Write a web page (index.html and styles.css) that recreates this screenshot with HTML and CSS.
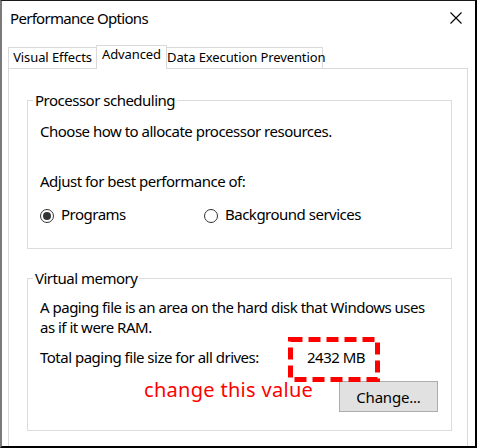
FILE: index.html
```html
<!DOCTYPE html>
<html>
<head>
<meta charset="utf-8">
<link rel="stylesheet" href="styles.css">
</head>
<body>
<div class="window">
  <div class="titlebar">
    <span class="title">Performance Options</span>
    <svg class="close" width="12" height="12" viewBox="0 0 12 12"><path d="M0.5 0.5 L11.5 11.5 M11.5 0.5 L0.5 11.5" stroke="#000" stroke-width="1.1" fill="none"/></svg>
  </div>
  <div class="tabs">
    <div class="tab tab-visual">Visual Effects</div>
    <div class="tab tab-advanced active">Advanced</div>
    <div class="tab tab-dep">Data Execution Prevention</div>
  </div>
  <div class="panel">
    <fieldset class="group group-cpu">
      <legend>Processor scheduling</legend>
      <p class="line">Choose how to allocate processor resources.</p>
      <p class="line adjust">Adjust for best performance of:</p>
      <div class="radios">
        <label class="radio"><span class="dot checked"></span>Programs</label>
        <label class="radio"><span class="dot"></span>Background services</label>
      </div>
    </fieldset>
    <fieldset class="group group-vm">
      <legend>Virtual memory</legend>
      <p class="line para">A paging file is an area on the hard disk that Windows uses as if it were RAM.</p>
      <div class="total">
        <span>Total paging file size for all drives:</span>
        <span class="value">2432 MB<svg class="mark" width="92" height="45" viewBox="0 0 92 45"><rect x="2.5" y="2.5" width="87" height="40" fill="none" stroke="#ff0000" stroke-width="5" stroke-dasharray="12 6"/></svg></span>
      </div>
      <div class="actions">
        <span class="note">change this value</span>
        <button class="btn">Change...</button>
      </div>
    </fieldset>
  </div>
</div>
</body>
</html>
```
FILE: styles.css
```css
* { box-sizing: border-box; }
html, body { margin: 0; padding: 0; background: #fff; }
body { font-family: "Noto Sans", "Open Sans", "DejaVu Sans", sans-serif; color: #000; }

.window {
  width: 477px;
  height: 448px;
  border-top: 1px solid #1a1a1a;
  border-left: 2px solid #7a7a7a;
  border-right: 2px solid #000;
  border-bottom: 2px solid #000;
  background: #fff;
  overflow: hidden;
  display: flex;
  flex-direction: column;
}

.titlebar {
  flex: none;
  height: 44px;
  display: flex;
  align-items: flex-start;
  justify-content: space-between;
  padding: 7px 13px 0 8px;
}
.title { font-size: 15px; line-height: 20px; letter-spacing: -0.7px; }
.close { margin-top: 4px; }

.tabs {
  flex: none;
  display: flex;
  align-items: flex-end;
  height: 23px;
  margin-left: 6px;
  position: relative;
  z-index: 1;
}
.tab {
  height: 21px;
  border: 1px solid #d9d9d9;
  border-bottom: 0;
  background: #fff;
  font-size: 13px;
  line-height: 18px;
  text-align: center;
  white-space: nowrap;
  letter-spacing: -0.1px;
}
.tab-visual { width: 89px; }
.tab-advanced { width: 71px; margin-left: -1px; }
.tab-dep { width: 157px; margin-left: -1px; }
.tab.active {
  height: 24px;
  margin-bottom: -1px;
  line-height: 16px;
}

.panel {
  flex: none;
  margin-left: 6px;
  width: 460px;
  height: 390px;
  border: 1px solid #d9d9d9;
  background: #fff;
  padding-top: 21px;
}

.group {
  margin: 0 15px 0 18px;
  padding: 0 13px 0 12px;
  border: 1px solid #dcdcdc;
  font-size: 15px;
  line-height: 20px;
  letter-spacing: -0.5px;
}
.group legend {
  margin-left: -7px;
  padding: 0 2px;
  font-size: 15px;
  line-height: 20px;
}
.line { margin: 0; }

.group-cpu { padding-top: 11px; padding-bottom: 24px; }
.adjust { margin-top: 30px; }
.radios {
  margin-top: 13px;
  display: grid;
  grid-template-columns: 164px auto;
}
.radio { display: flex; align-items: center; }
.dot {
  width: 14px;
  height: 14px;
  border: 1px solid #333;
  border-radius: 50%;
  margin-right: 7px;
  margin-top: 3px;
  display: flex;
  align-items: center;
  justify-content: center;
  flex: none;
}
.dot.checked::after {
  content: "";
  width: 8px;
  height: 8px;
  border-radius: 50%;
  background: #333;
}

.group-vm { margin-top: 19px; padding-top: 9px; padding-right: 7px; padding-bottom: 18px; }
.para { max-width: 400px; }
.total {
  margin-top: 10px;
  display: grid;
  grid-template-columns: 267px auto;
}
.value { position: relative; }
.mark { position: absolute; left: -19px; top: -10px; }

.actions {
  margin-top: 10px;
  display: flex;
  align-items: flex-start;
}
.note {
  margin-left: 104px;
  color: #ff0000;
  font-size: 20px;
  line-height: 26px;
  letter-spacing: 0.3px;
}
.btn {
  margin-left: auto;
  margin-right: 6px;
  margin-top: 4px;
  width: 99px;
  height: 31px;
  background: #e1e1e1;
  border: 1px solid #adadad;
  font-family: inherit;
  font-size: 15px;
  letter-spacing: -0.2px;
  color: #000;
  padding: 0;
}
```
